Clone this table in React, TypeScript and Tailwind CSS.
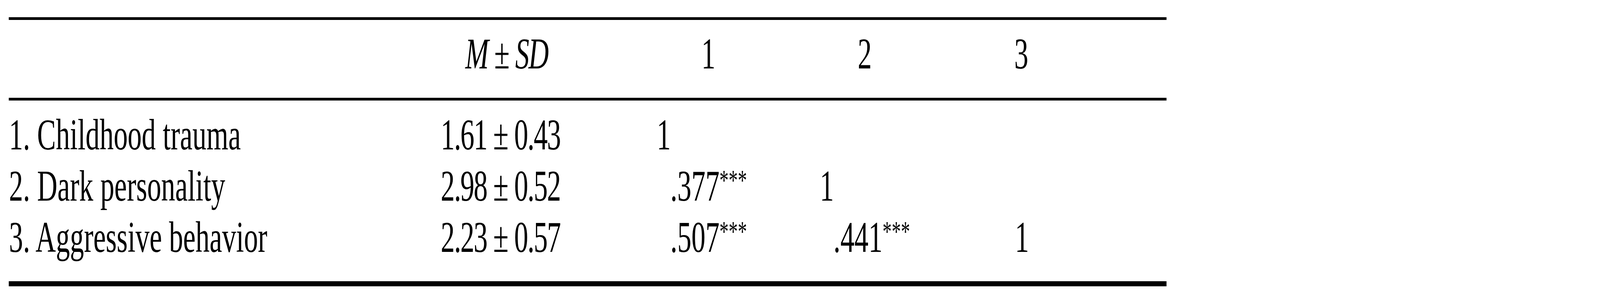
import { useEffect, useState } from "react";

type Cell = { text: React.ReactNode; pad: string };

// the table is drawn at its design width and fitted to the window
const DESIGN_W = 6378;

const cols = ["w-[1685px]", "w-[840px]", "w-[640px]", "w-[780px]", "w-[670px]"];

function Stars() {
  return <span className="text-[73px] leading-none align-[27px]">***</span>;
}

const header: Cell[] = [
  { text: "", pad: "pl-0" },
  {
    text: (
      <>
        <i>M</i> ± <i>SD</i>
      </>
    ),
    pad: "pl-[135px] tracking-[-3px]",
  },
  { text: "1", pad: "pl-[236px]" },
  { text: "2", pad: "pl-[219px]" },
  { text: "3", pad: "pl-[63px]" },
];

const rows: Cell[][] = [
  [
    { text: "1. Childhood trauma", pad: "pl-px" },
    { text: "1.61 ± 0.43", pad: "pl-[37px] tracking-[-3px]" },
    { text: "1", pad: "pl-[58px]" },
    { text: "", pad: "pl-0" },
    { text: "", pad: "pl-0" },
  ],
  [
    { text: "2. Dark personality", pad: "pl-px" },
    { text: "2.98 ± 0.52", pad: "pl-[37px] tracking-[-3px]" },
    {
      text: (
        <>
          .377
          <Stars />
        </>
      ),
      pad: "pl-[112px]",
    },
    { text: "1", pad: "pl-[68px]" },
    { text: "", pad: "pl-0" },
  ],
  [
    { text: "3. Aggressive behavior", pad: "pl-px" },
    { text: "2.23 ± 0.57", pad: "pl-[37px] tracking-[-3px]" },
    {
      text: (
        <>
          .507
          <Stars />
        </>
      ),
      pad: "pl-[112px]",
    },
    {
      text: (
        <>
          .441
          <Stars />
        </>
      ),
      pad: "pl-[122px]",
    },
    { text: "1", pad: "pl-[66px]" },
  ],
];

function Row({ cells }: { cells: Cell[] }) {
  return (
    <div className="flex h-[131px] leading-[131px]">
      {cells.map((c, i) => (
        <div key={i} className={`${cols[i]} ${c.pad} shrink-0 whitespace-nowrap`}>
          {c.text}
        </div>
      ))}
    </div>
  );
}

export default function App() {
  const [k, setK] = useState(() => window.innerWidth / DESIGN_W);

  useEffect(() => {
    const onResize = () => setK(window.innerWidth / DESIGN_W);
    window.addEventListener("resize", onResize);
    return () => window.removeEventListener("resize", onResize);
  }, []);

  return (
    <div className="w-full h-[744px] bg-white overflow-hidden">
      <div
        className="w-[6378px] h-[744px] origin-top-left text-black pt-[44px] pl-[35px] text-[112px]"
        style={{
          fontFamily: '"Liberation Serif", "Times New Roman", serif',
          transform: `scaleX(${k})`,
        }}
      >
        <div className="w-[4615px] border-t-[7px] border-b-[13px] border-black">
          {/* header */}
          <div className="pt-[21px] pb-[47px] border-b-[7px] border-black">
            <Row cells={header} />
          </div>

          {/* body */}
          <div className="pt-[22px] pb-[47px]">
            {rows.map((r, i) => (
              <Row key={i} cells={r} />
            ))}
          </div>
        </div>
      </div>
    </div>
  );
}
